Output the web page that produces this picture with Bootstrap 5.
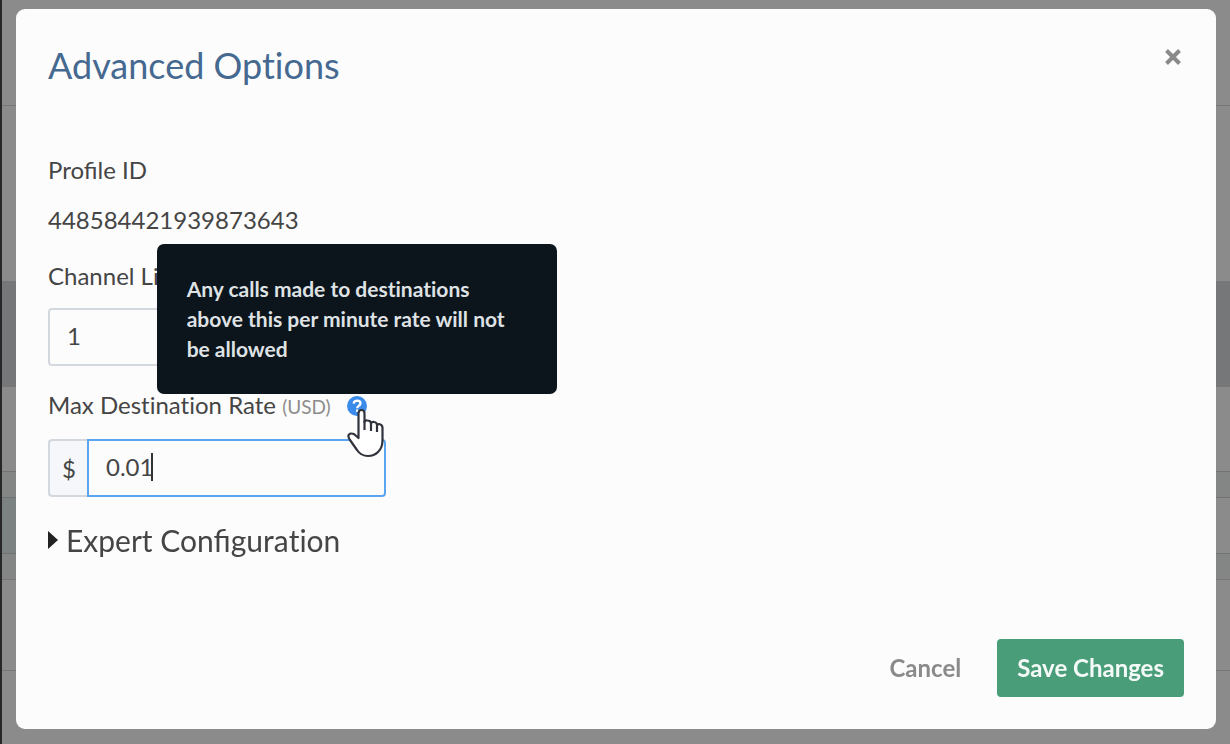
<!DOCTYPE html>
<html lang="en">
<head>
<meta charset="utf-8">
<meta name="viewport" content="width=device-width, initial-scale=1">
<title>Advanced Options</title>
<link href="https://cdn.jsdelivr.net/npm/bootstrap@5.3.0/dist/css/bootstrap.min.css" rel="stylesheet">
<style>
  body { font-family: Lato, "Open Sans", sans-serif; font-size: 24px; line-height: 30px; color: #454545; background: #8b8b8b; overflow: hidden; }
  .plain-pairs { font-variant-ligatures: none; }
  .backpage { border-left: 2px solid #272727; min-height: 100vh; }
  .strip { border-top: 1px solid #767676; }
  .strip-head { height: 105px; }
  .strip-intro { height: 176px; }
  .strip-dark { height: 106px; background: #757778; border: 0; }
  .strip-gap { height: 84px; border: 0; }
  .strip-thin { height: 26px; background: #848686; border-color: #707374; }
  .strip-mid { height: 56px; background: linear-gradient(90deg, #7c8282 50%, #8b8b8b 50%); border-color: #707374; }
  .strip-low { height: 91px; }
  .options-dialog { max-width: none; margin: 9px 14px 15px 16px; }
  .options-dialog .modal-content { background: #fcfcfc; border: 0; border-radius: 9px; color: inherit; }
  .options-head { padding: 34px 32px 0; }
  .options-title { font-size: 36px; line-height: 44px; color: #456990; }
  .close-x { width: 22px; height: 28px; color: #8a8a8a; }
  .options-body { padding: 68px 32px 0; }
  .profile-label { margin-bottom: 20px; }
  .profile-value { margin-bottom: 26px; }
  .field-col { width: 338px; }
  .field-name { margin-bottom: 17px; }
  .field-box, .money-sign { height: 58px; font-size: 24px; border: 2px solid #d3d8df; border-radius: 4px; color: #454545; }
  .field-box, .field-box:focus { background: #fcfcfc; box-shadow: none; padding: 4px 17px 8px; }
  .money-sign { width: 40px; flex-shrink: 0; background: #f5f7fa; border-right: 0; padding: 2px 0 0; }
  .field-active, .field-active:focus { border-color: #5aa5f0; caret-color: transparent; }
  .text-caret { width: 2px; height: 28px; background: #333; left: 64px; top: 14px; }
  .unit { font-size: 19px; color: #8c8c8c; }
  .help-mark { width: 20px; height: 20px; }
  .help-tip { width: 400px; padding: 30px; border-radius: 7px; background: #0c141c; color: #dfe2e4; left: 50%; bottom: calc(100% + 2px); transform: translateX(-50%); z-index: 8; font-size: 21px; font-weight: 700; }
  .pointer-hand { width: 38px; height: 50px; left: 0; top: 12px; z-index: 9; }
  .expert summary { font-size: 30px; line-height: 38px; list-style: none; }
  .expert summary svg { width: 10px; height: 18px; }
  .options-foot { padding: 80px 32px 32px; }
  .act { height: 58px; font-size: 24px; font-weight: 700; border: 0; border-radius: 4px; padding: 0 20px; }
  .act-plain { color: #8a8a8a; }
  .act-save, .act-save:hover { background: #4a9d79; color: #f4faf7; }
</style>
</head>
<body>
<div class="backpage" aria-hidden="true">
  <div class="strip-head"></div>
  <div class="strip strip-intro"></div>
  <div class="strip strip-dark"></div>
  <div class="strip strip-gap"></div>
  <div class="strip strip-thin"></div>
  <div class="strip strip-mid"></div>
  <div class="strip strip-thin"></div>
  <div class="strip strip-low"></div>
  <div class="strip"></div>
</div>

<div class="modal d-block" role="dialog" aria-modal="true" aria-labelledby="optionsTitle">
  <div class="modal-dialog options-dialog">
    <form class="modal-content">
      <div class="options-head d-flex justify-content-between align-items-start">
        <h1 class="options-title plain-pairs fw-normal mb-0" id="optionsTitle">Advanced Options</h1>
        <button type="button" class="close-x btn p-0 border-0 d-flex" aria-label="Close">
          <svg viewBox="0 0 22 28" width="22" height="28" aria-hidden="true"><path d="M4.500 7.500l13 13M17.500 7.500l-13 13" stroke="currentColor" stroke-width="4"/></svg>
        </button>
      </div>

      <div class="options-body">
        <div class="profile-label">Profile ID</div>
        <div class="profile-value">448584421939873643</div>
        <div class="field-col mb-4">
          <label class="field-name d-block" for="channelLimit">Channel Limit</label>
          <input class="form-control field-box" id="channelLimit" type="text" value="1">
        </div>
        <div class="field-col mb-4">
          <div class="field-name d-flex align-items-center">
            <label class="plain-pairs" for="maxRate">Max Destination Rate <span class="unit">(USD)</span></label>
            <span class="help-mark position-relative d-block ms-3">
              <svg class="d-block" viewBox="0 0 20 20" width="20" height="20" aria-hidden="true"><circle cx="10" cy="10" r="10" fill="#3a8bea"/><path d="M6.6 7.6Q7 4.6 10.2 4.6Q13.5 4.7 13.5 7.4Q13.4 9 11.6 9.9Q10.2 10.7 10.2 12.2M10.2 13.6V16" fill="none" stroke="#fff" stroke-width="2.3"/></svg>
              <span class="help-tip plain-pairs position-absolute" role="tooltip">Any calls made to destinations above this per minute rate will not be allowed</span>
              <svg class="pointer-hand position-absolute" viewBox="0 0 38 50" aria-hidden="true"><path d="M11.5 24V5.500Q11.500 2 14.500 2Q17.500 2 17.500 5.500V14Q18 12 20.500 12.500Q23.500 12.500 24 15Q25 13.300 27.200 14Q29.800 14.300 30 17Q31 15.700 33 16.300Q35.500 17 35.500 20V32Q35.500 40 31 44Q27 48 21 48Q14 48 10 42L3 32Q0.500 28.500 2 26.500Q4 24.500 7.500 26.500L11.500 30Z" fill="#fff" stroke="#30333c" stroke-width="2.200" stroke-linejoin="round"/><path d="M17.500 13v9M24 15v8M30 17v7" fill="none" stroke="#30333c" stroke-width="2.200"/></svg>
            </span>
          </div>
          <div class="input-group flex-nowrap">
            <span class="input-group-text money-sign justify-content-center">$</span>
            <div class="position-relative flex-fill">
              <input class="form-control field-box field-active rounded-start-0" id="maxRate" type="text" inputmode="decimal" value="0.01">
              <span class="text-caret position-absolute" aria-hidden="true"></span>
            </div>
          </div>
        </div>
        <details class="expert">
          <summary class="d-flex align-items-center gap-2"><svg viewBox="0 0 10 18" aria-hidden="true"><path d="M0 0L10 9L0 18Z" fill="#222"/></svg><span>Expert Configura<span class="plain-pairs">tion</span></span></summary>
        </details>
      </div>

      <div class="options-foot d-flex justify-content-end gap-3">
        <button type="button" class="btn act act-plain">Cancel</button>
        <button type="submit" class="btn act act-save">Save Changes</button>
      </div>
    </form>
  </div>
</div>
<script src="https://cdn.jsdelivr.net/npm/bootstrap@5.3.0/dist/js/bootstrap.bundle.min.js"></script>
</body>
</html>
